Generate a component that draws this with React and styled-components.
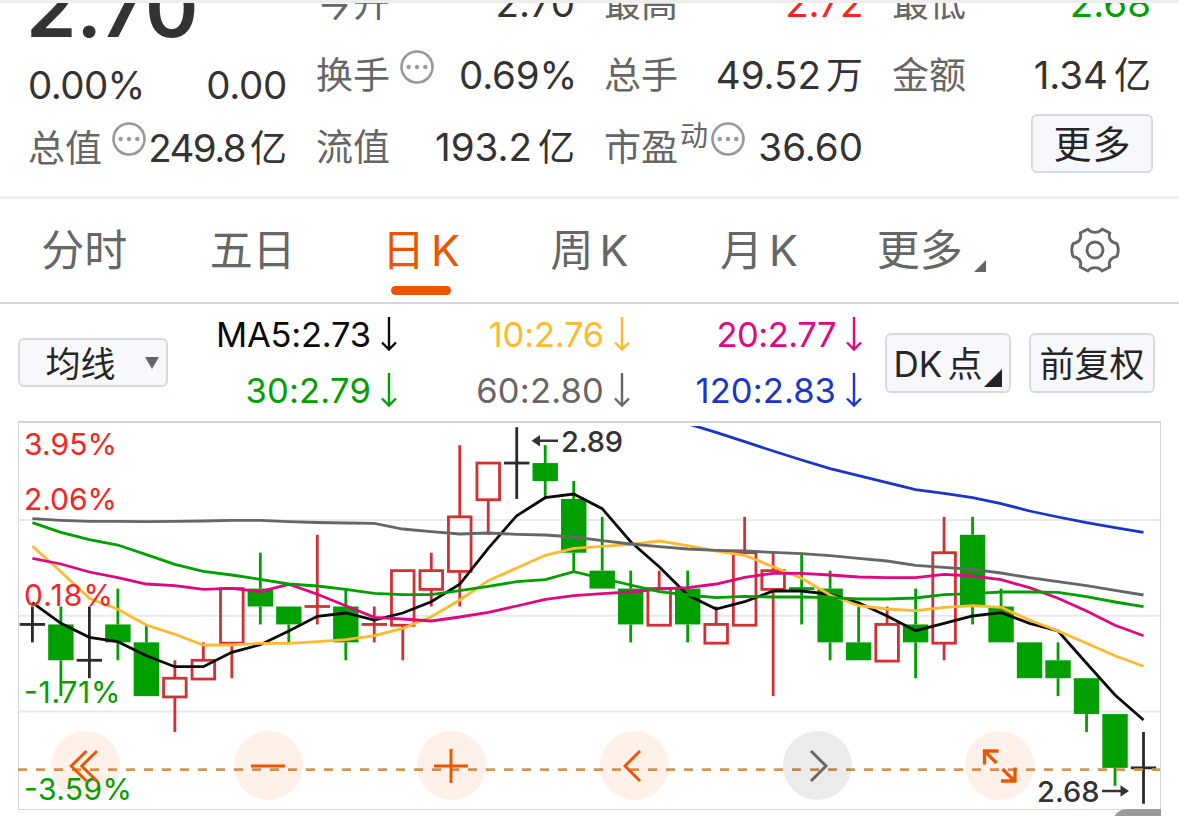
import React from "react";
import styled, { createGlobalStyle } from "styled-components";

const GlobalStyle = createGlobalStyle`
  body {
    margin: 0;
    background: #fff;
    overflow: hidden;
  }
  * {
    box-sizing: border-box;
  }
`;

const Page = styled.div`
  width: 1179px;
  height: 816px;
  overflow: hidden;
  display: flex;
  flex-direction: column;
  background: #fff;
  font-family: Inter, "Noto Sans CJK SC", sans-serif;
  color: #333;
  white-space: nowrap;
`;

const Quote = styled.section`
  height: 199px;
  flex: none;
  border-top: 3px solid #ededed;
  border-bottom: 3px solid #ededed;
  padding: 0 27px 0 28px;
  display: grid;
  grid-template-columns: repeat(4, 259px);
  column-gap: 29px;
  overflow: hidden;
`;

const Column = styled.div`
  display: flex;
  flex-direction: column;
  margin-top: ${(p) => p.$top || -36}px;
`;

const Row = styled.div`
  height: ${(p) => p.$height || 72}px;
  flex: none;
  display: flex;
  align-items: center;
  justify-content: space-between;
  line-height: 1;
`;

const Label = styled.span`
  display: flex;
  align-items: center;
  font-size: 37px;
  color: #666;
`;

const Sup = styled.sup`
  font-size: 28px;
  line-height: 1;
  margin: 0 1px 22px 2px;
`;

const Value = styled.span`
  font-size: 38.5px;
  letter-spacing: ${(p) => p.$spacing ?? 0}px;
  margin-right: ${(p) => p.$shift || 0}px;
  color: ${(p) => p.$color || "#333"};
`;

const Unit = styled.span`
  font-size: 37px;
  margin-left: ${(p) => p.$gap ?? 6}px;
  letter-spacing: 0;
`;

const Price = styled.span`
  font-size: 81px;
  font-weight: 600;
  letter-spacing: -0.3px;
  margin: 16px 0 0 -2px;
`;

const Dots = styled.svg`
  width: 34px;
  height: 34px;
  margin: ${(p) => p.$margin || "0 0 17px 10px"};
`;

const Button = styled.button`
  width: ${(p) => p.$width}px;
  height: ${(p) => p.$height}px;
  flex: none;
  margin: ${(p) => p.$margin || 0};
  padding: ${(p) => p.$padding || "4px 0 0"};
  display: flex;
  align-items: center;
  justify-content: center;
  border: 2px solid #d7dbe0;
  border-radius: 6px;
  background: #f7f8fb;
  color: #262626;
  font-family: inherit;
  font-size: ${(p) => p.$size || 35}px;
  line-height: 1;
  letter-spacing: ${(p) => p.$spacing || 0}px;
`;

const Tabs = styled.nav`
  height: 105px;
  flex: none;
  display: grid;
  grid-template-columns: repeat(7, 1fr);
  border-bottom: 2px solid #d3d7db;
`;

const Tab = styled.div`
  position: relative;
  display: flex;
  align-items: center;
  justify-content: center;
  gap: 6px;
  padding-left: ${(p) => p.$indent || 0}px;
  font-size: 43px;
  line-height: 1;
  color: ${(p) => (p.$active ? "#eb5500" : "#666")};

  &::after {
    content: "";
    display: ${(p) => (p.$active ? "block" : "none")};
    position: absolute;
    bottom: 7px;
    width: 60px;
    height: 9px;
    border-radius: 5px;
    background: #eb5500;
  }
`;

const Corner = styled.svg`
  width: ${(p) => p.$size}px;
  height: ${(p) => p.$size}px;
  align-self: flex-end;
  margin: ${(p) => p.$margin};
`;

const Averages = styled.section`
  height: 117px;
  flex: none;
  display: flex;
  align-items: center;
  padding: 0 24px 0 18px;
`;

const Legend = styled.div`
  width: 694px;
  display: grid;
  grid-template-columns: 229px 233px 232px;
  grid-auto-rows: 56px;
`;

const LegendItem = styled.div`
  display: flex;
  align-items: center;
  justify-content: flex-end;
  gap: 10px;
  font-size: 34.5px;
  letter-spacing: ${(p) => p.$spacing}px;
  color: ${(p) => p.$color};

  svg {
    margin-bottom: 1px;
  }
`;

const Actions = styled.div`
  display: flex;
  gap: 18px;
  margin-left: auto;
`;

const ChartBox = styled.section`
  position: relative;
  width: 1143px;
  height: 389px;
  flex: none;
  margin-left: 18px;

  > svg {
    display: block;
  }
`;

const Controls = styled.div`
  position: absolute;
  left: 33px;
  top: 310px;
  display: flex;
  gap: 113.9px;
`;

const Round = styled.button`
  width: 69px;
  height: 69px;
  padding: 0;
  border: 0;
  border-radius: 50%;
  display: flex;
  align-items: center;
  justify-content: center;
  background: ${(p) => (p.$muted ? "rgba(0, 0, 0, 0.08)" : "rgba(255, 85, 0, 0.082)")};
  color: ${(p) => (p.$muted ? "#666" : "#eb5500")};
`;

const NextTab = styled.div`
  width: 47px;
  height: 10px;
  flex: none;
  margin: -1px 18px 0 auto;
  border-top-left-radius: 14px 10px;
  background: #999;
  z-index: 1;
`;

const RED = "#d33033";
const GREEN = "#00a000";
const BLACK = "#2a2a2a";

// [color, body top, body bottom, high, low], counted in cents below 2.89
const candles = [
  ["k", 11, 11, 10, 12], ["g", 11, 13, 10, 15], ["k", 13, 13, 10, 14], ["g", 11, 12, 9, 13],
  ["g", 12, 15, 11, 15], ["r", 14, 15, 13, 17], ["r", 13, 14, 12, 14], ["r", 9, 12, 9, 14],
  ["g", 9, 10, 7, 11], ["g", 10, 11, 10, 12], ["r", 10, 10, 6, 11], ["g", 10, 12, 9, 13],
  ["r", 11, 11, 10, 12], ["r", 8, 11, 8, 13], ["r", 8, 9, 7, 10], ["r", 5, 8, 1, 10],
  ["r", 2, 4, 2, 6], ["k", 2, 2, 0, 4], ["g", 2, 3, 1, 4], ["g", 4, 7, 3, 8],
  ["g", 8, 9, 5, 9], ["g", 9, 11, 8, 12], ["r", 9, 11, 8, 11], ["g", 9, 11, 8, 12],
  ["r", 11, 12, 10, 12], ["r", 7, 11, 5, 11], ["r", 8, 9, 7, 15], ["g", 9, 9, 7, 11],
  ["g", 9, 12, 8, 13], ["g", 12, 13, 10, 13], ["r", 11, 13, 10, 13], ["g", 11, 12, 9, 14],
  ["r", 7, 12, 5, 13], ["g", 6, 10, 5, 11], ["g", 10, 12, 9, 12], ["g", 12, 14, 12, 14],
  ["g", 13, 14, 12, 15], ["g", 14, 16, 14, 17], ["g", 16, 19, 16, 20], ["k", 19, 19, 17, 21],
];

const averages = [
  {
    color: "#0a0a0a",
    start: 0,
    points: [602.7, 623.3, 637.3, 641.7, 655.7, 666.7, 666.7, 652.3, 644.7, 631, 616.3, 613, 620, 613, 601.7, 584.3, 548.3, 515.7, 497.7, 494, 508.7, 541.7, 566.7, 595, 609, 601.7, 591, 591, 594.3, 602.7, 616, 630.7, 623.3, 616, 612.7, 623.3, 631, 663.3, 695, 720],
  },
  {
    color: "#ffb92e",
    start: 0,
    points: [546.3, 571.7, 598.3, 609.3, 625, 634.3, 645, 645, 643.3, 643.3, 641.7, 639.7, 635.7, 628.3, 616.7, 600, 580.7, 568, 555.3, 548.3, 546.3, 544.3, 541, 545.7, 551, 555.3, 566.7, 578.3, 595, 605.7, 609, 610.7, 607.3, 605.7, 607.3, 620, 631, 643.3, 655.7, 666.3],
  },
  {
    color: "#e0077f",
    start: 0,
    points: [558.3, 564, 572, 577.7, 584, 585.7, 589.3, 588.3, 591.7, 584.3, 594.3, 605.7, 617.3, 619, 621, 617, 612.3, 606, 599.3, 595.7, 593.7, 592, 589, 587.7, 584, 577.3, 573.3, 573.3, 575, 577, 577.7, 577.7, 574.3, 576, 579.7, 587.7, 598.3, 611, 625.3, 635.7],
  },
  {
    color: GREEN,
    start: 0,
    points: [522.7, 532.3, 539.7, 545, 554.7, 564.3, 571.3, 575, 579.3, 584, 586, 589.3, 593.3, 594.7, 594.7, 590.7, 586.3, 581.7, 579.7, 571.7, 578.3, 585, 591.7, 595, 597.7, 596.3, 597, 597, 597.7, 599, 599, 598, 594.7, 593.7, 592, 592, 592.3, 596.7, 602, 606.7],
  },
  {
    color: "#666",
    start: 0,
    points: [518.7, 520.3, 521.3, 521.3, 521.7, 521.3, 521, 520.3, 520.3, 521.7, 522.5, 523, 523.3, 529, 531.7, 534, 533, 534.3, 535, 537, 540.7, 544, 546.7, 549, 550.3, 551, 552.3, 553.7, 555.7, 558.3, 561, 565.3, 567.3, 569.3, 573, 577.7, 581.7, 585.7, 590.3, 595],
  },
  {
    color: "#1a35c8",
    start: 23,
    points: [423.8, 432.3, 441.7, 451, 460, 468.7, 475.7, 482.7, 489.7, 493.3, 497.7, 503.7, 511, 517, 522.7, 527.7, 532.3],
  },
];

const percents = [
  { text: "3.95%", y: 455, color: "#fa2323", width: 93 },
  { text: "2.06%", y: 510, color: "#fa2323", width: 93 },
  { text: "0.18%", y: 605.5, color: "#fa2323", width: 89 },
  { text: "-1.71%", y: 702.5, color: GREEN, width: 96.5 },
  { text: "-3.59%", y: 799.5, color: GREEN, width: 108 },
];

const legend = [
  { text: "MA5:2.73", color: "#0a0a0a", spacing: -0.2 },
  { text: "10:2.76", color: "#ffb92e", spacing: -0.2 },
  { text: "20:2.77", color: "#e0077f", spacing: -0.5 },
  { text: "30:2.79", color: GREEN, spacing: 0.2 },
  { text: "60:2.80", color: "#666", spacing: 0.2 },
  { text: "120:2.83", color: "#1a35c8", spacing: 0.1 },
];

const xOf = (i) => 32.4 + i * 28.49;
const yOf = (cents) => 427.2 + cents * 17.93;

const More = ({ margin }) => (
  <Dots viewBox="0 0 34 34" $margin={margin}>
    <circle cx="17" cy="17" r="15.5" fill="none" stroke="#999" strokeWidth="2.6" />
    <circle cx="8.7" cy="17" r="2.2" fill="#999" />
    <circle cx="17" cy="17" r="2.2" fill="#999" />
    <circle cx="25.3" cy="17" r="2.2" fill="#999" />
  </Dots>
);

const DownArrow = () => (
  <svg width="16" height="34" viewBox="0 0 16 34" fill="none" stroke="currentColor" strokeWidth="2.4">
    <path d="M8 0V33M1 25.5L8 32.5L15 25.5" />
  </svg>
);

const Gear = () => (
  <svg width="50" height="48" viewBox="-25 -23 50 48" fill="none" stroke="#666" strokeWidth="2.9" strokeLinejoin="round">
    <circle r="8" />
    <path d="M-7 -21C-4 -16.5 4 -16.5 7 -21L14.8 -17C13 -11 16 -7.5 22 -6.3Q24.5 0 22 6.3C16 7.5 13 11 14.8 17L7 21C4 16.5 -4 16.5 -7 21L-14.8 17C-13 11 -16 7.5 -22 6.3Q-24.5 0 -22 -6.3C-16 -7.5 -13 -11 -14.8 -17Z" />
  </svg>
);

const Candle = ({ index, data }) => {
  const [kind, top, bottom, high, low] = data;
  const color = kind === "r" ? RED : kind === "g" ? GREEN : BLACK;
  const x = xOf(index);
  return (
    <g stroke={color} strokeWidth="2.8">
      {high < top && <path d={`M${x} ${yOf(high)}V${yOf(top)}`} />}
      {low > bottom && <path d={`M${x} ${yOf(bottom)}V${yOf(low)}`} />}
      {top === bottom && <path d={`M${x - 12.7} ${yOf(top)}H${x + 12.7}`} />}
      {top < bottom && kind === "r" && (
        <rect x={x - 11.3} y={yOf(top)} width="22.6" height={yOf(bottom) - yOf(top) + 0.8} fill="none" />
      )}
      {top < bottom && kind === "g" && (
        <rect x={x - 12.7} y={yOf(top)} width="25.4" height={yOf(bottom) - yOf(top)} fill={color} stroke="none" />
      )}
    </g>
  );
};

const Chart = () => (
  <svg width="1143" height="389" viewBox="18 421 1143 389" fontFamily="Inter, sans-serif">
    <defs>
      <clipPath id="plot">
        <rect x="19" y="426" width="1141" height="383" />
      </clipPath>
    </defs>
    <path d="M19 520H1160M19 615.7H1160M19 711.5H1160" stroke="#e6e9f0" strokeWidth="2" />
    <path d="M18 422H1161" stroke="#d3d7db" strokeWidth="2" />
    <path d="M18.5 421V809.5H1160.5V421" fill="none" stroke="#d3d7db" strokeWidth="1" />
    {candles.map((data, i) => (
      <Candle key={i} index={i} data={data} />
    ))}
    <path d="M18 769.6H1160" stroke="#cf9555" strokeWidth="2.8" strokeDasharray="9 9" />
    <g fill="none" strokeWidth="2.8" clipPath="url(#plot)">
      {averages.map((line) => (
        <polyline
          key={line.color}
          stroke={line.color}
          points={line.points.map((y, i) => `${xOf(i + line.start)},${y}`).join(" ")}
        />
      ))}
    </g>
    {percents.map((p) => (
      <text key={p.text} x="24" y={p.y} fill={p.color} fontSize="30" textLength={p.width}>
        {p.text}
      </text>
    ))}
    <g fill="#333" fontSize="29" fontWeight="500">
      <text x="561" y="451.5" textLength="62">2.89</text>
      <text x="1037" y="802" textLength="62.5">2.68</text>
      <path d="M538 440.7H558M1102 791H1122" stroke="#333" strokeWidth="2.6" />
      <path d="M531.5 440.7L540 435V446.5ZM1129 791L1120.5 785.3V796.7Z" />
    </g>
  </svg>
);

const icons = [
  <path key="first" d="M0.5 -15L-14.8 0L0.5 15M11 -15L-4.3 0L11 15" />,
  <path key="minus" d="M-17 0H17" />,
  <path key="plus" d="M-17 0H17M0 -17V17" />,
  <path key="prev" d="M6 -15L-9 0L6 15" />,
  <path key="next" d="M-6 -15L9 0L-6 15" />,
  <path key="expand" d="M-3.5 -3L-15.5 -15M-15.5 -1.5V-15H-1.5M2.5 3L14.5 15M15 1.5V15H1" strokeWidth="3.3" />,
];

const App = () => (
  <>
    <GlobalStyle />
    <Page>
      <Quote>
        <Column $top={-63}>
          <Row $height={120}><Price>2.70</Price></Row>
          <Row $height={50}>
            <Value $spacing={-0.6}>0.00%</Value>
            <Value $spacing={-0.3}>0.00</Value>
          </Row>
          <Row $height={76}>
            <Label>总值<More margin="0 0 18px 10px" /></Label>
            <Value $spacing={-1.6}>249.8<Unit $gap={5}>亿</Unit></Value>
          </Row>
        </Column>
        <Column>
          <Row><Label>今开</Label><Value>2.70</Value></Row>
          <Row><Label>换手<More /></Label><Value $spacing={-0.2} $shift={-2}>0.69%</Value></Row>
          <Row><Label>流值</Label><Value>193.2<Unit>亿</Unit></Value></Row>
        </Column>
        <Column>
          <Row><Label>最高</Label><Value $color="#fa2323" $spacing={-0.4}>2.72</Value></Row>
          <Row><Label>总手</Label><Value>49.52<Unit $gap={5}>万</Unit></Value></Row>
          <Row>
            <Label>市盈<Sup>动</Sup><More margin="0 0 17px 2px" /></Label>
            <Value>36.60</Value>
          </Row>
        </Column>
        <Column>
          <Row><Label>最低</Label><Value $color={GREEN}>2.68</Value></Row>
          <Row><Label>金额</Label><Value>1.34<Unit>亿</Unit></Value></Row>
          <Row>
            <span />
            <Button $width={122} $height={59} $size={38} $spacing={1} $margin="0 -2px 8px 0" $padding="2px 0 0 1px">更多</Button>
          </Row>
        </Column>
      </Quote>

      <Tabs>
        <Tab>分时</Tab>
        <Tab>五日</Tab>
        <Tab $active><span>日</span><span>K</span></Tab>
        <Tab><span>周</span><span>K</span></Tab>
        <Tab $indent={2}><span>月</span><span>K</span></Tab>
        <Tab $indent={10}>
          更多
          <Corner $size={12} $margin="0 0 30px 5px" viewBox="0 0 12 12">
            <path d="M12 0V12H0Z" fill="#666" />
          </Corner>
        </Tab>
        <Tab><Gear /></Tab>
      </Tabs>

      <Averages>
        <Button $width={150} $height={49} $padding="3px 0 0 18px">
          均线
          <svg width="14" height="12" viewBox="0 0 14 12" style={{ marginLeft: 29, marginBottom: 3 }}>
            <path d="M0 0H14L7 12Z" fill="#666" />
          </svg>
        </Button>
        <Legend>
          {legend.map((item) => (
            <LegendItem key={item.text} $color={item.color} $spacing={item.spacing}>
              {item.text}
              <DownArrow />
            </LegendItem>
          ))}
        </Legend>
        <Actions>
          <Button $width={126} $height={60}>
            <span>DK</span>
            <span style={{ marginLeft: 5 }}>点</span>
            <Corner $size={18} $margin="0 0 4px 2px" viewBox="0 0 18 18">
              <path d="M18 0V18H0Z" fill="#222" />
            </Corner>
          </Button>
          <Button $width={126} $height={60}>前复权</Button>
        </Actions>
      </Averages>

      <ChartBox>
        <Chart />
        <Controls>
          {icons.map((icon) => (
            <Round key={icon.key} $muted={icon.key === "next"}>
              <svg width="40" height="40" viewBox="-20 -20 40 40" fill="none" stroke="currentColor" strokeWidth="2.9">
                {icon}
              </svg>
            </Round>
          ))}
        </Controls>
      </ChartBox>
      <NextTab />
    </Page>
  </>
);

export default App;
